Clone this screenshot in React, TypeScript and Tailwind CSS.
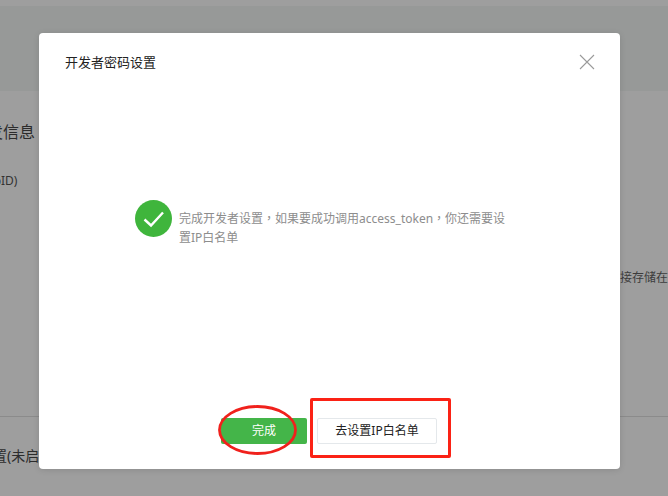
const cjk = "font-['Noto_Sans','Noto_Sans_CJK_SC',sans-serif]";

const CheckBadge = () => (
  <svg width="37" height="37" viewBox="0 0 37 37" className="shrink-0">
    <circle cx="18.5" cy="18.5" r="18.5" fill="#3fb53c" />
    <path d="M9.5 19.5 L16 25.5 L28 12.5" fill="none" stroke="#fff" strokeWidth="2.4" />
  </svg>
);

const CloseIcon = () => (
  <svg width="16" height="16" viewBox="0 0 16 16">
    <path d="M1 1 L15 15 M15 1 L1 15" fill="none" stroke="#9a9a9a" strokeWidth="1.1" />
  </svg>
);

const Backdrop = () => (
  <div className="flex h-full flex-col overflow-hidden bg-[#9e9e9e] text-[#333]">
    <div className="mt-[6px] h-[85px] shrink-0 bg-[#979998]" />
    <div className="-ml-[29px] mt-[29px] text-[16px] leading-[24px] text-[#2c2c2c]">开发信息</div>
    <div className="-ml-[25px] mt-[29px] text-[12px] leading-[16px] text-[#333]">(AppID)</div>
    <div className="mt-[81px] flex justify-end text-[12px] leading-[16px] text-[#3c3c3c]">
      <span className="w-[48px] whitespace-nowrap">接存储在微</span>
    </div>
    <div className="mt-[130px] border-t border-[#8b8b8b] pt-[29px]">
      <div className="-ml-[7px] text-[14px] leading-[20px] text-[#2c2c2c]">置(未启用)</div>
    </div>
  </div>
);

export default function App() {
  return (
    <div className={`relative h-[496px] w-[668px] overflow-hidden ${cjk}`}>
      <Backdrop />

      <div className="absolute left-[39px] top-[33px] flex h-[436px] w-[581px] flex-col rounded-[4px] bg-white shadow-[0_1px_6px_rgba(0,0,0,0.12)]">
        <div className="flex items-start justify-between pl-[26px] pr-[25px] pt-[20px]">
          <h3 className="text-[13px] font-normal leading-[18px] text-[#222]">开发者密码设置</h3>
          <button type="button" className="mt-[1px]">
            <CloseIcon />
          </button>
        </div>

        <div className="ml-[96px] mt-[129px] flex items-start gap-[7px]">
          <CheckBadge />
          <p className="mt-[8px] w-[335px] text-[12px] leading-[19px] text-[#8d8d8d]">
            完成开发者设置<span className="font-['Noto_Sans_CJK_TC']">，</span>如果要成功调用access_token
            <span className="font-['Noto_Sans_CJK_TC']">，</span>你还需要设置IP白名单
          </p>
        </div>

        <div className="mt-auto flex justify-center gap-[10px] pb-[25px] pr-[1px]">
          <button
            type="button"
            className="h-[26px] w-[86px] rounded-[2px] bg-[#44b549] text-[12px] text-white"
          >
            完成
          </button>
          <button
            type="button"
            className="h-[26px] w-[120px] rounded-[2px] border border-[#e4e8eb] bg-white text-[12px] text-[#222]"
          >
            去设置IP白名单
          </button>
        </div>
      </div>

      {/* red hand-drawn annotations */}
      <svg width="80" height="52" viewBox="0 0 80 52" className="absolute left-[218px] top-[405px]">
        <ellipse cx="39.5" cy="25" rx="38" ry="23.5" fill="none" stroke="#f0211c" strokeWidth="2.8" />
      </svg>
      <div className="absolute left-[310px] top-[398px] h-[60px] w-[141px] rounded-[2px] border-[3px] border-[#fb2215]" />
    </div>
  );
}
